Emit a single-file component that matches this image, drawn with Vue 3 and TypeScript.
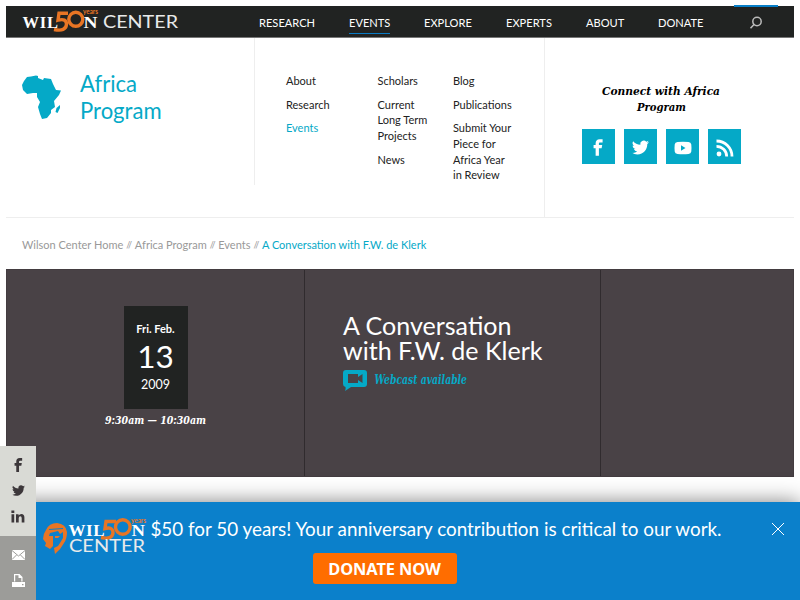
<script setup lang="ts">
interface NavItem { label: string; width: number; active?: boolean }
interface Crumb { label: string; current?: boolean }

const nav: NavItem[] = [
  { label: 'RESEARCH', width: 90 },
  { label: 'EVENTS', width: 75, active: true },
  { label: 'EXPLORE', width: 82 },
  { label: 'EXPERTS', width: 80 },
  { label: 'ABOUT', width: 72 },
  { label: 'DONATE', width: 75 },
]

const menus: string[][] = [
  ['About', 'Research', 'Events'],
  ['Scholars', 'Current\nLong Term\nProjects', 'News'],
  ['Blog', 'Publications', 'Submit Your\nPiece for\nAfrica Year\nin Review'],
]

const crumbs: Crumb[] = [
  { label: 'Wilson Center Home' },
  { label: 'Africa Program' },
  { label: 'Events' },
  { label: 'A Conversation with F.W. de Klerk', current: true },
]

const facebook = 'M14 8h3V4h-3.500C10 4 8.500 6 8.500 9v2H6v4h2.500v9h4v-9h3.300l.7-4h-4V9.300C12.500 8.400 13 8 14 8z'
const twitter = 'M23.950 4.570a10 10 0 0 1-2.820.77 4.960 4.960 0 0 0 2.160-2.720c-.95.56-2 .96-3.130 1.190a4.920 4.920 0 0 0-8.380 4.480C7.690 8.100 4.070 6.130 1.640 3.160a4.920 4.920 0 0 0 1.520 6.570 4.900 4.900 0 0 1-2.230-.61v.06a4.920 4.920 0 0 0 3.950 4.830 5 5 0 0 1-2.210.08 4.940 4.940 0 0 0 4.600 3.420A9.870 9.870 0 0 1 0 19.540a14 14 0 0 0 7.550 2.210c9.050 0 14-7.500 14-13.980 0-.21 0-.42-.02-.63a9.940 9.940 0 0 0 2.420-2.570z'
</script>

<template>
  <div class="page">
    <header class="topbar">
      <svg class="logo" width="160" height="31" viewBox="0 0 160 31">
        <text class="roman" x="0.500" y="22" font-size="16.500" textLength="35.500" lengthAdjust="spacing">WIL</text>
        <text class="roman" x="61.500" y="22" font-size="16.500" textLength="14" lengthAdjust="spacingAndGlyphs">N</text>
        <path class="five" d="M46 7.200H37L36 14.200Q44.500 12 44.500 18.200Q44 26 32 23.500" />
        <circle class="zero" cx="53.800" cy="13.300" r="7" />
        <text class="years" x="61" y="8" font-size="6.500" textLength="15" lengthAdjust="spacingAndGlyphs">years</text>
        <text class="center" x="81" y="21.800" font-size="18" textLength="75" lengthAdjust="spacingAndGlyphs">CENTER</text>
      </svg>
      <nav class="nav">
        <div v-for="item in nav" :key="item.label" class="nav-item" :style="{ width: item.width + 'px' }">
          <a :class="{ active: item.active }">{{ item.label }}</a>
        </div>
      </nav>
      <div class="search">
        <svg width="14" height="14" viewBox="0 0 14 14"><circle cx="8" cy="5.500" r="4.200" /><path d="M5 8.500L1.500 12.300" /></svg>
      </div>
    </header>

    <section class="program">
      <div class="brand">
        <svg class="africa" width="40" height="46" viewBox="0 0 40 46">
          <path d="M5 2L9 1.500L14 .5L16 1L16 3L21 5L22 3L29 4L31 9L34 15L39 15.500L37 20L32 26L33 32L29 35L29 38L25 43L20 44L18 39L16 32L18 27L15 22L15 18L11 18L5 19L1 15L0 10L2 6Z" />
          <path d="M38 30L38 33L35.500 38L33.500 37L34.500 33Z" />
        </svg>
        <h2>Africa<br />Program</h2>
      </div>
      <div class="menus">
        <ul v-for="(menu, i) in menus" :key="i">
          <li v-for="entry in menu" :key="entry" :class="{ current: entry === 'Events' }">{{ entry }}</li>
        </ul>
      </div>
      <aside class="connect">
        <svg class="connect-title" width="122" height="34" viewBox="0 0 122 34">
          <text x="1" y="12.500" textLength="118" lengthAdjust="spacingAndGlyphs">Connect with Africa</text>
          <text x="36" y="28.500" textLength="49" lengthAdjust="spacingAndGlyphs">Program</text>
        </svg>
        <div class="socials">
          <a><svg width="23" height="23" viewBox="0 0 28 28"><path :d="facebook" transform="translate(2 0)" /></svg></a>
          <a><svg width="17" height="17" viewBox="0 0 24 24"><path :d="twitter" /></svg></a>
          <a><svg width="18" height="14" viewBox="0 0 18 14"><path fill-rule="evenodd" d="M3.500 1Q9 .5 14.500 1Q17 1 17.300 3.500Q17.700 7 17.300 10.500Q17 12.800 14.500 13Q9 13.500 3.500 13Q1 12.800 .7 10.500Q.3 7 .7 3.500Q1 1 3.500 1ZM7 4.200V9.800L11.500 7Z" /></svg></a>
          <a><svg class="rss" width="18" height="18" viewBox="0 0 18 18"><circle cx="3" cy="15" r="2.400" /><path d="M.5 7.300A10.200 10.200 0 0 1 10.700 17.500M.5 2A15.500 15.500 0 0 1 16 17.500" /></svg></a>
        </div>
      </aside>
    </section>

    <div class="breadcrumbs">
      <template v-for="(crumb, i) in crumbs" :key="crumb.label">
        <span v-if="i" class="slashes">//</span>
        <a :class="{ here: crumb.current }">{{ crumb.label }}</a>
      </template>
    </div>

    <main class="hero">
      <div class="when">
        <div class="date">
          <b>Fri. Feb.</b>
          <span class="day">13</span>
          <span class="year">2009</span>
        </div>
        <svg class="time" width="110" height="20" viewBox="0 0 110 20">
          <text x="1" y="13.500" textLength="101" lengthAdjust="spacingAndGlyphs">9:30am — 10:30am</text>
        </svg>
      </div>
      <div class="event">
        <h1>A Conversation<br />with F.W. de Klerk</h1>
        <div class="webcast">
          <svg width="24" height="21" viewBox="0 0 24 21">
            <path fill-rule="evenodd" d="M3 0H21Q24 0 24 3V14Q24 17 21 17H8L2 21Q3 19 2.500 17Q0 16.500 0 14V3Q0 0 3 0ZM5 4V13H15V10L19.500 13V4L15 7V4Z" />
          </svg>
          <svg width="130" height="18" viewBox="0 0 130 18"><text x="0.500" y="13.500" textLength="92.500" lengthAdjust="spacingAndGlyphs">Webcast available</text></svg>
        </div>
      </div>
      <div class="extra"></div>
    </main>

    <div class="banner">
      <svg class="banner-logo" width="106" height="40" viewBox="0 0 106 40">
        <path class="face" fill-rule="evenodd" d="M3 12Q6 5 14 5Q23 6 24 14Q24 21 21 25Q18 31 12 36L11 30L15 28L17 25L20 20L20 14L17 16L15 13L7 15L6 18L10 18L10 28L7 31L2 28L3 25L0 21Q0 16 3 12ZM12 18H17L15 20H12ZM6 11L20 10V11L6 12Z" />
        <text class="roman" x="25.500" y="18" font-size="17" textLength="36" lengthAdjust="spacing">WIL</text>
        <text class="roman" x="88.500" y="18" font-size="17" textLength="13.500" lengthAdjust="spacingAndGlyphs">N</text>
        <path class="five" d="M73 3.500H63L62 10.500Q70 8.500 70 15Q69 22 58 19.500" />
        <circle class="zero" cx="79.800" cy="9" r="7.300" />
        <text class="years" x="88" y="4.500" font-size="6.500" textLength="15" lengthAdjust="spacingAndGlyphs">years</text>
        <text class="center" x="26" y="34" font-size="18" textLength="76" lengthAdjust="spacingAndGlyphs">CENTER</text>
      </svg>
      <div class="appeal">
        <p>$50 for 50 years! Your anniversary contribution is critical to our work.</p>
        <button>DONATE NOW</button>
      </div>
      <svg class="close" width="14" height="14" viewBox="0 0 14 14"><path d="M1 1L13 13M13 1L1 13" /></svg>
    </div>

    <div class="share">
      <div class="networks">
        <svg width="18" height="18" viewBox="0 2 26 26"><path :d="facebook" transform="translate(2 1)" /></svg>
        <svg width="13" height="13" viewBox="0 0 24 24"><path :d="twitter" /></svg>
        <svg width="14" height="13" viewBox="0 0 14 13"><path d="M.5 4.300H3.200V12.500H.5ZM.4 .5H3.300V3H.4ZM5 4.300H7.600V5.500Q8.500 4 10.400 4Q13.400 4 13.400 7.500V12.500H10.700V8.200Q10.700 6.300 9.300 6.300Q7.700 6.300 7.700 8.200V12.500H5Z" /></svg>
      </div>
      <div class="tools">
        <svg width="13" height="10" viewBox="0 0 13 10"><path d="M0 0H13V10H0Z" /><path class="crease" d="M0 .5L6.500 6L13 .5M0 9.500L4.500 5M13 9.500L8.500 5" /></svg>
        <svg width="13" height="13" viewBox="0 0 13 13"><path fill-rule="evenodd" d="M2 0H7.500L10.500 3V7.500H2ZM3.200 1.200V7.500H9.300V4H6.500V1.200ZM0 8H13V13H0ZM10 10V11.200H11.500V10Z" /></svg>
      </div>
    </div>
  </div>
</template>

<style>
body { background: #fff; overflow: hidden; }
</style>

<style scoped>
* { box-sizing: border-box; }
.page { width: 800px; height: 600px; padding: 6px 6px 0; overflow: hidden; position: relative; font-family: Lato, "Liberation Sans", sans-serif; color: #222; }
svg { display: block; flex: none; overflow: visible; }
h1, h2, p, ul { margin: 0; padding: 0; font-weight: 400; }
.topbar { height: 32px; background: #212322; display: flex; border-bottom: 1px solid #777; }
.logo { margin-left: 16px; }
.roman { font-family: "Liberation Serif", serif; font-weight: 700; fill: #fff; }
.center { fill: #e8eaea; font-family: Lato, sans-serif; }
.years { fill: #e87524; font-family: Lato, sans-serif; font-weight: 700; }
.five, .zero { fill: none; stroke: #e87524; stroke-width: 3.400; }
.face { fill: #e87524; }
.nav { display: flex; margin-left: 77px; font-size: 11.100px; color: #fff; }
.nav-item a { display: block; width: fit-content; height: 28px; line-height: 33px; }
.nav-item a.active { border-bottom: 1px solid #0a7bc4; }
.search { width: 44px; margin-left: 1px; border-top: 2px solid #087fc8; height: 31px; display: flex; justify-content: center; padding-top: 9px; margin-top: -1px; }
.search svg { fill: none; stroke: #bbb; stroke-width: 1.500; }
.program { height: 180px; border-bottom: 1px solid #eee; display: flex; }
.brand { width: 249px; height: 147px; border-right: 1px solid #eee; display: flex; padding: 32px 0 0 16px; color: #05a9c7; }
.africa { fill: #05a9c7; margin-top: 5px; }
.brand h2 { height: 54px; margin-left: 3px; padding-left: 15px; font-size: 22.100px; line-height: 27px; }
.menus { width: 290px; border-right: 1px solid #eee; padding: 35.400px 0 0 31px; display: grid; grid-template-columns: 91.500px 75.500px 80px; font-size: 11px; line-height: 15.600px; }
.menus li { list-style: none; white-space: pre-line; margin-bottom: 7.900px; }
.menus .current { color: #05a9c7; }
.connect { padding: 44px 0 0 37px; }
.connect-title text, .time text, .webcast text { font-family: "DejaVu Serif Condensed", "DejaVu Serif", serif; font-weight: 700; font-style: italic; }
.connect-title { margin-left: 19px; font-size: 11.500px; }
.socials { display: flex; gap: 9px; margin-top: 13px; }
.socials a { width: 33px; height: 35px; background: #05a9c7; display: grid; place-items: center; }
.socials svg { fill: #fff; margin-top: 2px; }
.socials .rss path { fill: none; stroke: #fff; stroke-width: 2.800; }
.breadcrumbs { height: 51px; padding: 1px 16px 0; display: flex; align-items: center; gap: 3px; font-size: 11px; color: #999; }
.slashes { font-size: 9px; letter-spacing: -.3px; }
.here { color: #05a9c7; }
.hero { height: 208px; background: #494246; display: flex; border: 1px solid #433c40; margin-top: -.5px; }
.when { width: 298px; border-right: 1px solid #302b2e; padding: 36.500px 0 0 116.500px; color: #fff; }
.date { width: 64px; height: 103px; background: #212322; display: flex; flex-direction: column; align-items: center; padding-top: 15.500px; }
.date b { font-size: 11px; line-height: 14px; }
.day { font-size: 31.500px; line-height: 38px; margin-top: 1.500px; }
.year { font-size: 12.500px; line-height: 16px; margin-top: 2px; }
.time { margin-left: -20px; margin-top: 1px; fill: #fff; font-size: 11.500px; }
.event { width: 295.500px; border-right: 1px solid #302b2e; padding: 43.500px 0 0 38px; color: #fff; }
.event h1 { font-size: 25.050px; line-height: 25px; }
.webcast { display: flex; gap: 7px; margin-top: 6.500px; fill: #05a9c7; font-size: 12px; }
.banner { position: absolute; left: 0; right: 0; bottom: 0; height: 98px; padding: 13px 15px 0 43px; background: #0b80cb; box-shadow: 0 0 20px rgba(0, 0, 0, .5); display: flex; }
.banner-logo { margin-top: 3px; }
.appeal { width: 572px; margin-left: 1px; text-align: center; }
.appeal p { color: #fff; font-size: 18.850px; line-height: 27px; white-space: nowrap; }
.appeal button { width: 144px; height: 31px; margin: 11px 0 0 -103px; display: inline-block; padding: 0; border: 0; border-radius: 3px; background: #ff6d00; color: #fff; font: 700 16.400px "Noto Sans", "Open Sans", sans-serif; letter-spacing: -.1px; }
.close { margin: 7px 0 0 auto; fill: none; stroke: #fff; stroke-width: 1; }
.share { position: absolute; left: 0; bottom: 0; width: 36px; height: 154px; display: flex; flex-direction: column; }
.networks { height: 90px; background: #d9dad5; fill: #3c373a; display: flex; flex-direction: column; align-items: center; padding-top: 10px; gap: 10px; }
.networks svg:last-child { margin-top: 3px; }
.tools { flex: 1; background: #9c9c99; fill: #fff; display: flex; flex-direction: column; align-items: center; padding-top: 14px; gap: 14px; }
.crease { fill: none; stroke: #9c9c99; stroke-width: 1; }
</style>
